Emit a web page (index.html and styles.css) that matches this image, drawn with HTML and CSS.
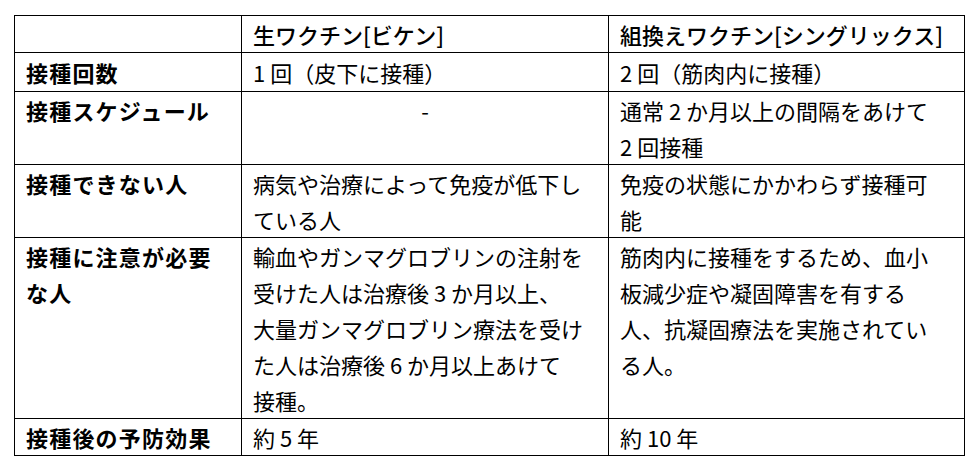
FILE: index.html
```html
<!DOCTYPE html>
<html lang="ja">
<head>
<meta charset="utf-8">
<link rel="stylesheet" href="styles.css">
</head>
<body>
<div class="page">
<table class="cmp">
  <colgroup>
    <col class="c1">
    <col class="c2">
    <col class="c3">
  </colgroup>
  <thead>
    <tr>
      <th class="blank"></th>
      <th>生ワクチン[ビケン]</th>
      <th>組換えワクチン[シングリックス]</th>
    </tr>
  </thead>
  <tbody>
    <tr class="r1">
      <th>接種回数</th>
      <td>1 回（皮下に接種）</td>
      <td>2 回（筋肉内に接種）</td>
    </tr>
    <tr>
      <th>接種スケジュール</th>
      <td class="center">-</td>
      <td>通常 2 か月以上の間隔をあけて<br>2 回接種</td>
    </tr>
    <tr>
      <th>接種できない人</th>
      <td>病気や治療によって免疫が低下し<br>ている人</td>
      <td>免疫の状態にかかわらず接種可<br>能</td>
    </tr>
    <tr>
      <th>接種に注意が必要<br>な人</th>
      <td>輸血やガンマグロブリンの注射を<br>受けた人は治療後 3 か月以上、<br>大量ガンマグロブリン療法を受け<br>た人は治療後 6 か月以上あけて<br>接種。</td>
      <td>筋肉内に接種をするため、血小<br>板減少症や凝固障害を有する<br>人、抗凝固療法を実施されてい<br>る人。</td>
    </tr>
    <tr>
      <th>接種後の予防効果</th>
      <td>約 5 年</td>
      <td>約 10 年</td>
    </tr>
  </tbody>
</table>
</div>
</body>
</html>
```

FILE: styles.css
```css
html, body {
  margin: 0;
  padding: 0;
  background: #ffffff;
}

.page {
  padding: 15px 0 0 14px;
}

.cmp {
  border-collapse: collapse;
  table-layout: fixed;
  width: 950px;
  font-family: "Noto Sans CJK JP", "Noto Sans", sans-serif;
  font-size: 22px;
  color: #000;
}

.c1 { width: 227px; }
.c2 { width: 367px; }
.c3 { width: 356px; }

.cmp th,
.cmp td {
  border: 1px solid #000;
  padding: 0 11px;
  line-height: 36px;
  vertical-align: top;
  text-align: left;
  white-space: nowrap;
}

.cmp tbody th {
  font-weight: 700;
  letter-spacing: 1.2px;
}

.cmp thead th {
  font-weight: 500;
}

.cmp td {
  font-weight: 400;
}

.cmp .r1 th,
.cmp .r1 td {
  padding-top: 1px;
  padding-bottom: 1px;
}

.cmp td.center {
  text-align: center;
}
```
